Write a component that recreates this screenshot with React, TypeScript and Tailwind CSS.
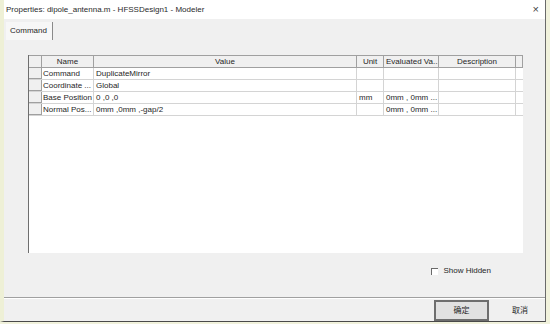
import React from 'react';

interface Row {
  name: string;
  value: string;
  unit: string;
  evaluated: string;
  description: string;
}

const rows: Row[] = [
  { name: 'Command', value: 'DuplicateMirror', unit: '', evaluated: '', description: '' },
  { name: 'Coordinate ...', value: 'Global', unit: '', evaluated: '', description: '' },
  { name: 'Base Position', value: '0 ,0 ,0', unit: 'mm', evaluated: '0mm , 0mm ...', description: '' },
  { name: 'Normal Pos...', value: '0mm ,0mm ,-gap/2', unit: '', evaluated: '0mm , 0mm ...', description: '' },
];

const font = { fontFamily: '"Liberation Sans", "Noto Sans CJK SC", sans-serif' };

const App: React.FC = () => {
  return (
    <div className="w-[550px] h-[324px] bg-[#f1f2dc] overflow-hidden text-[8px] text-[#262626]" style={font}>
      <div className="w-[546px] h-[322px] flex flex-col bg-[#f0f0f0] border-l-[4px] border-l-[#eef0d6] border-r border-b border-r-[#6a6a6a] border-b-[#4a4a4a]">
        {/* Title bar */}
        <div className="h-[19px] bg-white flex items-center justify-between pl-[2px] pr-[6px] shrink-0">
          <span className="text-[8px] text-[#2a2a2a]">Properties: dipole_antenna.m - HFSSDesign1 - Modeler</span>
          <span className="text-[11px] leading-none text-[#444]">×</span>
        </div>

        {/* Tab strip */}
        <div className="pt-[3px] pl-[2px] flex">
          <div className="h-[18px] w-[47px] flex items-center pl-[4px] bg-[#f7f7f7] border-r border-r-[#8a8a8a]">
            Command
          </div>
        </div>

        {/* Grid */}
        <div className="ml-[24px] mt-[15px] w-[495px] h-[202px] bg-white border-l border-l-[#6e6e6e] flex flex-col">
          <div className="flex h-[13px] bg-[#f0f0f0] border-t border-b border-[#a0a0a0]">
            <div className="w-[13px] border-r border-[#a0a0a0]"></div>
            <div className="w-[52px] border-r border-[#a0a0a0] flex items-center justify-center">Name</div>
            <div className="w-[263px] border-r border-[#a0a0a0] flex items-center justify-center">Value</div>
            <div className="w-[27px] border-r border-[#a0a0a0] flex items-center justify-center">Unit</div>
            <div className="w-[55px] border-r border-[#a0a0a0] flex items-center pl-[2px] whitespace-nowrap overflow-hidden">Evaluated Va...</div>
            <div className="w-[77px] border-r border-[#a0a0a0] flex items-center justify-center">Description</div>
            <div className="w-[7px] border-r border-[#a0a0a0]"></div>
          </div>
          {rows.map((r) => (
            <div key={r.name} className="flex h-[12px] border-b border-[#d4d4d4]">
              <div className="w-[13px] bg-[#f0f0f0] border-r border-b border-r-[#a0a0a0] border-b-[#a0a0a0]"></div>
              <div className="w-[52px] border-r border-[#d4d4d4] flex items-center pl-[1px] whitespace-nowrap overflow-hidden">{r.name}</div>
              <div className="w-[263px] border-r border-[#d4d4d4] flex items-center pl-[2px]">{r.value}</div>
              <div className="w-[27px] border-r border-[#d4d4d4] flex items-center pl-[2px]">{r.unit}</div>
              <div className="w-[55px] border-r border-[#d4d4d4] flex items-center pl-[2px] whitespace-nowrap overflow-hidden">{r.evaluated}</div>
              <div className="w-[77px] border-r border-[#d4d4d4] flex items-center">{r.description}</div>
            </div>
          ))}
        </div>

        {/* Show hidden */}
        <div className="flex items-center justify-end pr-[54px] mt-[12px] gap-[5px]">
          <div className="w-[7px] h-[7px] border-l border-t border-[#6a6a6a] bg-white"></div>
          <span>Show Hidden</span>
        </div>

        {/* Separator + buttons */}
        <div className="mt-[20px] border-t border-t-[#a0a0a0]">
          <div className="border-t border-t-white flex items-center justify-end gap-[11px] pt-[1px] pr-[5px]">
            <div className="w-[55px] h-[21px] border-2 border-[#6e6e6e] bg-[#e1e1e1] flex items-center justify-center">确定</div>
            <div className="w-[40px] h-[21px] flex items-center justify-center">取消</div>
          </div>
        </div>
      </div>
    </div>
  );
};

export default App;
